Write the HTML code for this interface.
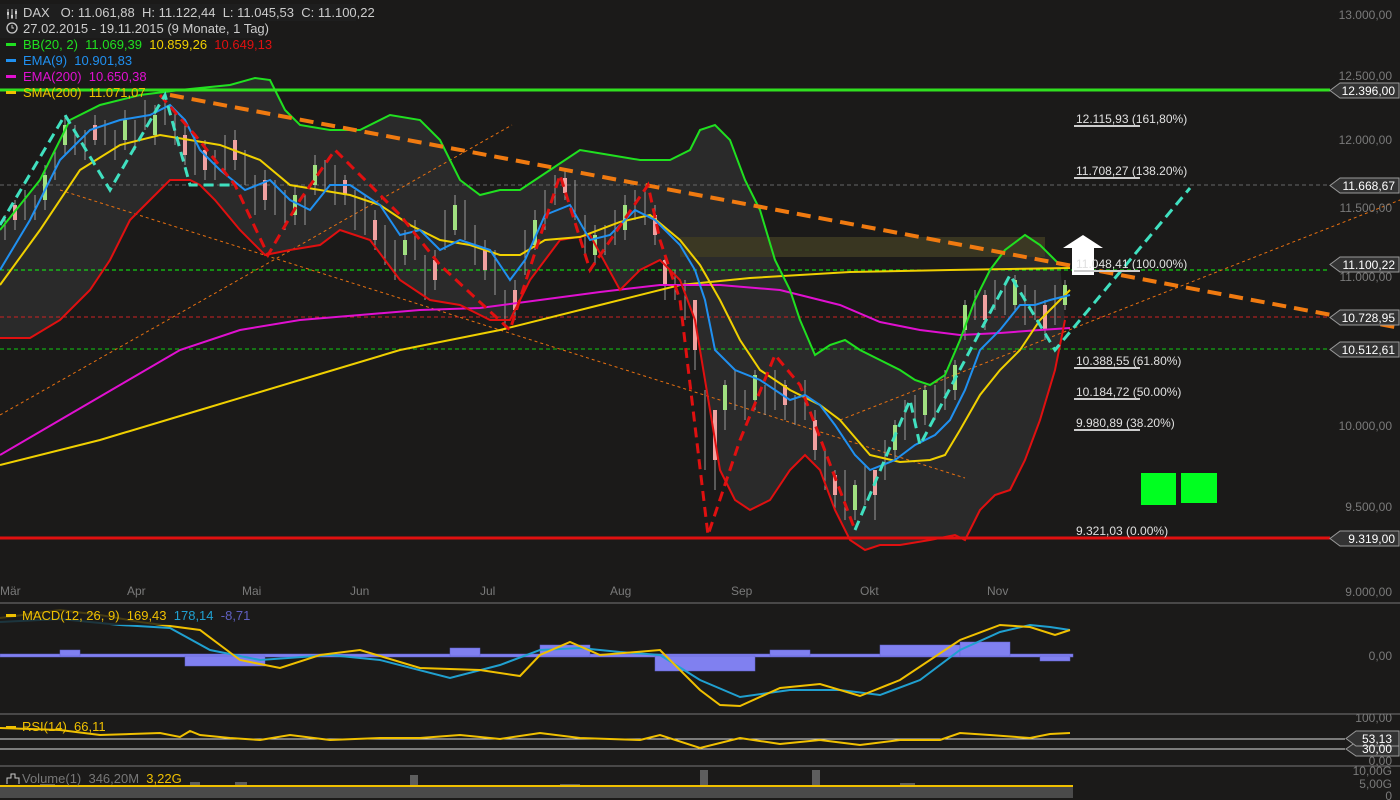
<!DOCTYPE html>
<html><head><meta charset="utf-8"><style>
html,body{margin:0;padding:0;background:#1b1a19;overflow:hidden}
svg{display:block;font-family:"Liberation Sans",sans-serif}
text{white-space:pre}
.ax{fill:#7a7a7a;font-size:12px}
.fib{fill:#e0e0e0;font-size:12px}
</style></head><body>
<svg width="1400" height="800" viewBox="0 0 1400 800">
<rect width="1400" height="800" fill="#1b1a19"/>
<polygon fill="#2a2a2a" points="0,230 40,180 70,120 100,105 140,95 180,90 230,85 255,78 270,80 285,110 300,125 330,130 360,130 390,115 420,120 440,140 460,180 480,195 500,190 520,190 550,170 580,150 610,155 640,160 670,160 690,150 700,130 715,125 730,140 745,180 760,210 775,260 790,290 800,320 815,355 830,345 845,340 860,350 880,360 900,370 915,380 930,385 945,375 960,340 975,300 990,270 1005,250 1025,235 1040,245 1060,265 1065,320 1055,370 1040,420 1025,460 1010,490 995,495 980,510 965,540 955,535 930,540 900,545 880,545 865,550 850,540 835,510 820,470 805,455 790,470 770,500 750,510 735,500 720,470 705,380 695,320 680,280 660,260 640,270 620,290 590,235 560,240 530,280 510,320 490,320 460,305 430,300 400,280 370,240 340,230 320,245 290,250 265,255 240,230 215,200 200,185 190,180 170,180 150,200 130,220 110,260 90,290 60,320 30,338 0,338"/>
<rect x="680" y="237" width="365" height="20" fill="#3d3a22" opacity="0.9"/>
<line x1="0" y1="185" x2="1330" y2="185" stroke="#666" stroke-dasharray="4,3"/>
<line x1="0" y1="270" x2="1330" y2="270" stroke="#1f1" stroke-dasharray="4,3"/>
<line x1="0" y1="317" x2="1330" y2="317" stroke="#c22" stroke-dasharray="4,3"/>
<line x1="0" y1="349" x2="1330" y2="349" stroke="#1c1" stroke-dasharray="4,3"/>
<g stroke="#e87010" stroke-width="1" stroke-dasharray="3,3" fill="none">
<line x1="0" y1="415" x2="512" y2="125"/>
<line x1="60" y1="190" x2="965" y2="478"/>
<line x1="840" y1="420" x2="1400" y2="200"/>
</g>
<!-- candles -->
<g stroke="#999" stroke-width="1">
<path d="M5 215v25M15 200v30M25 190v30M35 195v25M45 165v45M55 150v30M65 115v40M75 125v30M85 130v30M95 115v30M105 120v25M115 130v30M125 110v40M135 120v30M145 100v30M155 105v40M165 95v30M175 110v35M185 125v40M195 135v40M205 140v40M215 150v30M225 135v40M235 130v40M245 150v35M255 175v40M265 170v40M275 180v35M285 190v40M295 185v40M305 195v30M315 155v40M325 160v30M335 165v40M345 175v30M355 190v40M365 195v40M375 210v40M385 225v40M395 240v40M405 230v35M415 220v40M425 255v45M435 250v40M445 210v40M455 195v40M465 200v40M475 225v40M485 240v40M495 250v45M505 290v40M515 280v40M525 230v45M535 210v40M545 190v40M555 175v30M565 170v30M575 180v40M585 215v40M595 225v40M605 225v30M615 210v35M625 195v45M635 190v30M645 190v35M655 205v40M665 255v45M675 270v30M685 280v40M695 300v70M705 390v80M715 410v80M725 380v50M735 370v40M745 390v30M755 370v40M765 385v30M775 370v40M785 380v40M795 395v30M805 380v40M815 410v50M825 450v40M835 470v40M845 470v50M855 480v40M865 465v40M875 470v50M885 440v40M895 420v40M905 400v40M915 395v30M925 385v40M935 385v35M945 370v40M955 360v40M965 300v40M975 290v30M985 290v40M995 280v30M1005 285v30M1015 275v35M1025 285v40M1035 290v30M1045 300v40M1055 285v40M1065 280v30"/>
</g>
<g>
<rect x="13" y="205" width="4" height="15" fill="#f0a0a0"/><rect x="43" y="175" width="4" height="25" fill="#a0e080"/><rect x="63" y="125" width="4" height="20" fill="#a0e080"/><rect x="93" y="125" width="4" height="15" fill="#f0a0a0"/><rect x="123" y="120" width="4" height="20" fill="#a0e080"/><rect x="153" y="115" width="4" height="20" fill="#a0e080"/><rect x="183" y="135" width="4" height="20" fill="#f0a0a0"/><rect x="203" y="150" width="4" height="20" fill="#f0a0a0"/><rect x="233" y="140" width="4" height="20" fill="#f0a0a0"/><rect x="263" y="180" width="4" height="20" fill="#f0a0a0"/><rect x="293" y="195" width="4" height="20" fill="#a0e080"/><rect x="313" y="165" width="4" height="20" fill="#a0e080"/><rect x="343" y="180" width="4" height="15" fill="#f0a0a0"/><rect x="373" y="220" width="4" height="20" fill="#f0a0a0"/><rect x="403" y="240" width="4" height="15" fill="#a0e080"/><rect x="433" y="260" width="4" height="20" fill="#f0a0a0"/><rect x="453" y="205" width="4" height="25" fill="#a0e080"/><rect x="483" y="250" width="4" height="20" fill="#f0a0a0"/><rect x="513" y="290" width="4" height="20" fill="#f0a0a0"/><rect x="533" y="220" width="4" height="25" fill="#a0e080"/><rect x="563" y="178" width="4" height="15" fill="#f0a0a0"/><rect x="593" y="235" width="4" height="20" fill="#a0e080"/><rect x="623" y="205" width="4" height="25" fill="#a0e080"/><rect x="653" y="215" width="4" height="20" fill="#f0a0a0"/><rect x="663" y="260" width="4" height="25" fill="#f0a0a0"/><rect x="693" y="300" width="4" height="50" fill="#f0a0a0"/><rect x="713" y="410" width="4" height="50" fill="#f0a0a0"/><rect x="723" y="385" width="4" height="25" fill="#a0e080"/><rect x="753" y="375" width="4" height="25" fill="#a0e080"/><rect x="783" y="385" width="4" height="20" fill="#f0a0a0"/><rect x="813" y="420" width="4" height="30" fill="#f0a0a0"/><rect x="833" y="475" width="4" height="20" fill="#f0a0a0"/><rect x="853" y="485" width="4" height="25" fill="#a0e080"/><rect x="873" y="470" width="4" height="25" fill="#f0a0a0"/><rect x="893" y="425" width="4" height="25" fill="#a0e080"/><rect x="923" y="390" width="4" height="25" fill="#a0e080"/><rect x="953" y="365" width="4" height="25" fill="#a0e080"/><rect x="963" y="305" width="4" height="25" fill="#a0e080"/><rect x="983" y="295" width="4" height="25" fill="#f0a0a0"/><rect x="1013" y="280" width="4" height="25" fill="#a0e080"/><rect x="1043" y="305" width="4" height="25" fill="#f0a0a0"/><rect x="1063" y="285" width="4" height="20" fill="#a0e080"/>
</g>
<g fill="none" stroke-width="2">
<polyline stroke="#f0d000" points="0,465 100,440 200,410 300,380 400,350 500,330 600,305 680,285 750,278 850,272 950,270 1070,268"/>
<polyline stroke="#e010d0" points="0,455 60,420 120,385 180,350 240,330 300,320 360,315 420,310 480,308 540,300 600,292 660,285 720,285 780,290 840,305 880,322 920,330 960,335 1000,333 1040,330 1070,328"/>
<polyline stroke="#20e020" points="0,230 40,180 70,120 100,105 140,95 180,90 230,85 255,78 270,80 285,110 300,125 330,130 360,130 390,115 420,120 440,140 460,180 480,195 500,190 520,190 550,170 580,150 610,155 640,160 670,160 690,150 700,130 715,125 730,140 745,180 760,210 775,260 790,290 800,320 815,355 830,345 845,340 860,350 880,360 900,370 915,380 930,385 945,375 960,340 975,300 990,270 1005,250 1025,235 1040,245 1060,265"/>
<polyline stroke="#e01010" points="0,338 30,338 60,320 90,290 110,260 130,220 150,200 170,180 190,180 200,185 215,200 240,230 265,255 290,250 320,245 340,230 370,240 400,280 430,300 460,305 490,320 510,320 530,280 560,240 590,235 620,290 640,270 660,260 680,280 695,320 705,380 720,470 735,500 750,510 770,500 790,470 805,455 820,470 835,510 850,540 865,550 880,545 900,545 930,540 955,535 965,540 980,510 995,495 1010,490 1025,460 1040,420 1055,370 1065,320"/>
<polyline stroke="#f0d000" points="0,285 40,230 80,170 120,145 160,135 190,140 220,145 260,160 290,185 320,190 350,195 380,205 410,225 440,240 470,245 500,255 520,255 545,240 580,237 620,222 650,215 680,240 700,265 720,300 740,340 760,370 790,390 820,405 840,420 870,455 900,462 930,460 945,455 960,430 980,395 1000,370 1020,350 1040,320 1060,300 1070,290"/>
<polyline stroke="#2090f0" points="0,270 30,220 60,160 90,130 120,120 150,115 170,105 185,120 200,150 220,170 245,190 270,180 290,200 310,210 330,185 350,185 380,205 400,235 420,230 440,250 460,240 490,250 510,280 525,260 545,215 570,205 590,240 610,235 635,210 655,220 680,245 695,270 705,300 715,350 735,370 760,380 790,400 805,395 820,405 835,425 855,455 870,470 895,460 915,445 935,435 950,420 965,390 980,350 1000,330 1020,305 1035,305 1050,300 1070,295"/>
</g>
<line x1="170" y1="95" x2="1400" y2="328" stroke="#f07a10" stroke-width="4" stroke-dasharray="14,8"/>
<polyline fill="none" stroke="#e01010" stroke-width="3" stroke-dasharray="10,6" points="160,95 195,135 235,185 268,255 300,200 335,150 400,215 440,265 510,330 560,175 590,270 648,185 660,240 680,300 708,535 740,440 775,355 800,385 855,530"/>
<polyline fill="none" stroke="#40e0c0" stroke-width="3" stroke-dasharray="10,6" points="0,225 65,115 110,190 165,95 190,185 235,185"/>
<polyline fill="none" stroke="#40e0c0" stroke-width="3" stroke-dasharray="10,6" points="855,530 910,400 920,445 1010,275 1055,350 1190,188"/>
<polygon fill="#fff" points="1083,235 1103,248 1094,248 1094,275 1072,275 1072,248 1063,248"/>
<rect x="1141" y="473" width="35" height="32" fill="#00ff20"/>
<rect x="1181" y="473" width="36" height="30" fill="#00ff20"/>
<line x1="0" y1="90" x2="1330" y2="90" stroke="#30e020" stroke-width="3"/>
<line x1="0" y1="538" x2="1330" y2="538" stroke="#e01010" stroke-width="3"/>
<g class="fib">
<text x="1076" y="123">12.115,93 (161,80%)</text><line x1="1074" y1="126" x2="1140" y2="126" stroke="#ccc" stroke-width="2"/>
<text x="1076" y="175">11.708,27 (138.20%)</text><line x1="1074" y1="178" x2="1140" y2="178" stroke="#ccc" stroke-width="2"/>
<text x="1076" y="268">11.048,41 (100.00%)</text><line x1="1074" y1="271" x2="1140" y2="271" stroke="#ccc" stroke-width="2"/>
<text x="1076" y="365">10.388,55 (61.80%)</text><line x1="1074" y1="368" x2="1140" y2="368" stroke="#ccc" stroke-width="2"/>
<text x="1076" y="396">10.184,72 (50.00%)</text><line x1="1074" y1="399" x2="1140" y2="399" stroke="#ccc" stroke-width="2"/>
<text x="1076" y="427">9.980,89 (38.20%)</text><line x1="1074" y1="430" x2="1140" y2="430" stroke="#ccc" stroke-width="2"/>
<text x="1076" y="535">9.321,03 (0.00%)</text>
</g>
<g class="ax" text-anchor="end">
<text x="1392" y="19">13.000,00</text><text x="1392" y="80">12.500,00</text><text x="1392" y="144">12.000,00</text><text x="1392" y="212">11.500,00</text><text x="1392" y="281">11.000,00</text><text x="1392" y="430">10.000,00</text><text x="1392" y="511">9.500,00</text><text x="1392" y="596">9.000,00</text>
<text x="1392" y="660">0,00</text><text x="1392" y="722">100,00</text><text x="1392" y="765">0,00</text><text x="1392" y="775">10,00G</text><text x="1392" y="788">5,00G</text><text x="1392" y="800">0</text>
</g>
<g font-size="12" fill="#fff" text-anchor="end">
<g fill="#333" stroke="#999"><path d="M1340 83h59v15h-59l-10-7.5z"/><path d="M1340 178h59v15h-59l-10-7.5z"/><path d="M1340 257h59v15h-59l-10-7.5z"/><path d="M1340 310h59v15h-59l-10-7.5z"/><path d="M1340 342h59v15h-59l-10-7.5z"/><path d="M1340 531h59v15h-59l-10-7.5z"/><path d="M1356 742h43v14h-43l-10-7z"/><path d="M1356 731h43v15h-43l-10-7.5z"/></g>
<text x="1395" y="95">12.396,00</text><text x="1395" y="190">11.668,67</text><text x="1395" y="269">11.100,22</text><text x="1395" y="322">10.728,95</text><text x="1395" y="354">10.512,61</text><text x="1395" y="543">9.319,00</text><text x="1392" y="753">30,00</text><text x="1392" y="743">53,13</text>
</g>
<g class="ax"><text x="0" y="595">Mär</text><text x="127" y="595">Apr</text><text x="242" y="595">Mai</text><text x="350" y="595">Jun</text><text x="480" y="595">Jul</text><text x="610" y="595">Aug</text><text x="731" y="595">Sep</text><text x="860" y="595">Okt</text><text x="987" y="595">Nov</text></g>
<g stroke="#777"><line x1="0" y1="603" x2="1400" y2="603"/><line x1="0" y1="714" x2="1400" y2="714"/><line x1="0" y1="766" x2="1400" y2="766"/></g>
<g fill="#8080f0" stroke="#6060d0" stroke-width="0.5">
<rect x="0" y="654" width="1073" height="3"/>
<rect x="60" y="650" width="20" height="6"/><rect x="185" y="656" width="80" height="10"/><rect x="450" y="648" width="30" height="8"/><rect x="540" y="645" width="50" height="11"/><rect x="655" y="656" width="100" height="15"/><rect x="770" y="650" width="40" height="6"/><rect x="880" y="645" width="80" height="11"/><rect x="960" y="642" width="50" height="14"/><rect x="1040" y="656" width="30" height="5"/>
</g>
<polyline fill="none" stroke="#20a0d0" stroke-width="2" points="0,622 60,619 120,625 170,628 210,650 260,660 330,655 380,660 450,678 500,665 540,650 580,648 620,652 660,655 700,680 740,697 790,690 840,690 880,695 920,680 960,650 1000,632 1030,625 1050,627 1070,630"/>
<polyline fill="none" stroke="#f0c000" stroke-width="2" points="0,618 60,610 100,615 140,622 200,630 240,660 280,668 320,655 360,650 420,668 480,670 520,676 540,655 570,642 600,655 660,650 700,690 720,705 740,706 780,688 820,684 860,696 900,680 960,640 1000,625 1030,627 1055,635 1070,630"/>
<rect x="0" y="607" width="240" height="18" fill="#1b1a19" opacity="0.8"/>
<rect x="6" y="614" width="10" height="3" fill="#f0c000"/>
<text x="22" y="620" font-size="13"><tspan fill="#f0c000">MACD(12, 26, 9)  169,43</tspan><tspan fill="#20a0d0">  178,14</tspan><tspan fill="#6060c0">  -8,71</tspan></text>
<line x1="0" y1="739" x2="1345" y2="739" stroke="#ddd"/><line x1="0" y1="749" x2="1345" y2="749" stroke="#ddd"/>
<polyline fill="none" stroke="#f0c000" stroke-width="2" points="0,728 60,730 100,735 160,733 180,737 190,731 200,735 230,738 260,740 290,735 330,740 380,738 420,738 460,735 500,739 540,733 580,738 640,740 660,735 700,748 740,738 780,744 820,740 860,745 900,740 940,740 960,733 990,735 1030,738 1050,734 1070,733"/>
<rect x="6" y="726" width="10" height="3" fill="#f0c000"/>
<text x="22" y="731" font-size="13" fill="#f0c000">RSI(14)  66,11</text>
<g fill="#4a4a4a"><rect x="0" y="786" width="1073" height="12"/></g>
<g fill="#5e5e5e"><rect x="190" y="782" width="10" height="5"/><rect x="235" y="782" width="12" height="5"/><rect x="410" y="775" width="8" height="12"/><rect x="700" y="770" width="8" height="17"/><rect x="812" y="770" width="8" height="17"/><rect x="40" y="784" width="15" height="3"/><rect x="560" y="784" width="20" height="3"/><rect x="900" y="783" width="15" height="4"/></g>
<line x1="0" y1="786" x2="1073" y2="786" stroke="#f0c000" stroke-width="2"/>
<path d="M7 784v-6h4v-4h4v4h4v6" fill="none" stroke="#ccc"/>
<text x="22" y="783" font-size="13"><tspan fill="#777">Volume(1)  346,20M  </tspan><tspan fill="#f0c000">3,22G</tspan></text>
<g font-size="13">
<rect x="0" y="4" width="356" height="17" fill="#1e1e1e"/>
<rect x="0" y="21" width="260" height="17" fill="#1e1e1e"/>
<path d="M8 9v10M12 9v10M16 9v10" stroke="#ccc"/><rect x="7" y="12" width="2" height="3" fill="#ccc"/><rect x="11" y="15" width="2" height="3" fill="#ccc"/><rect x="15" y="11" width="2" height="3" fill="#ccc"/>
<text x="23" y="17" fill="#ccc">DAX   O: 11.061,88  H: 11.122,44  L: 11.045,53  C: 11.100,22</text>
<circle cx="12" cy="28" r="5" fill="none" stroke="#ccc" stroke-width="1.3"/><path d="M12 25v3h2" stroke="#ccc" fill="none"/>
<text x="23" y="33" fill="#ccc">27.02.2015 - 19.11.2015 (9 Monate, 1 Tag)</text>
<rect x="6" y="43" width="10" height="3" fill="#20e020"/><text x="23" y="49"><tspan fill="#20e020">BB(20, 2)  11.069,39  </tspan><tspan fill="#f0d000">10.859,26  </tspan><tspan fill="#e01010">10.649,13</tspan></text>
<rect x="6" y="59" width="10" height="3" fill="#2090f0"/><text x="23" y="65" fill="#2090f0">EMA(9)  10.901,83</text>
<rect x="6" y="75" width="10" height="3" fill="#e010d0"/><text x="23" y="81" fill="#e010d0">EMA(200)  10.650,38</text>
<rect x="6" y="91" width="10" height="3" fill="#f0c000"/><text x="23" y="97" fill="#f0c000">SMA(200)  11.071,07</text>
</g>
</svg>
</body></html>
